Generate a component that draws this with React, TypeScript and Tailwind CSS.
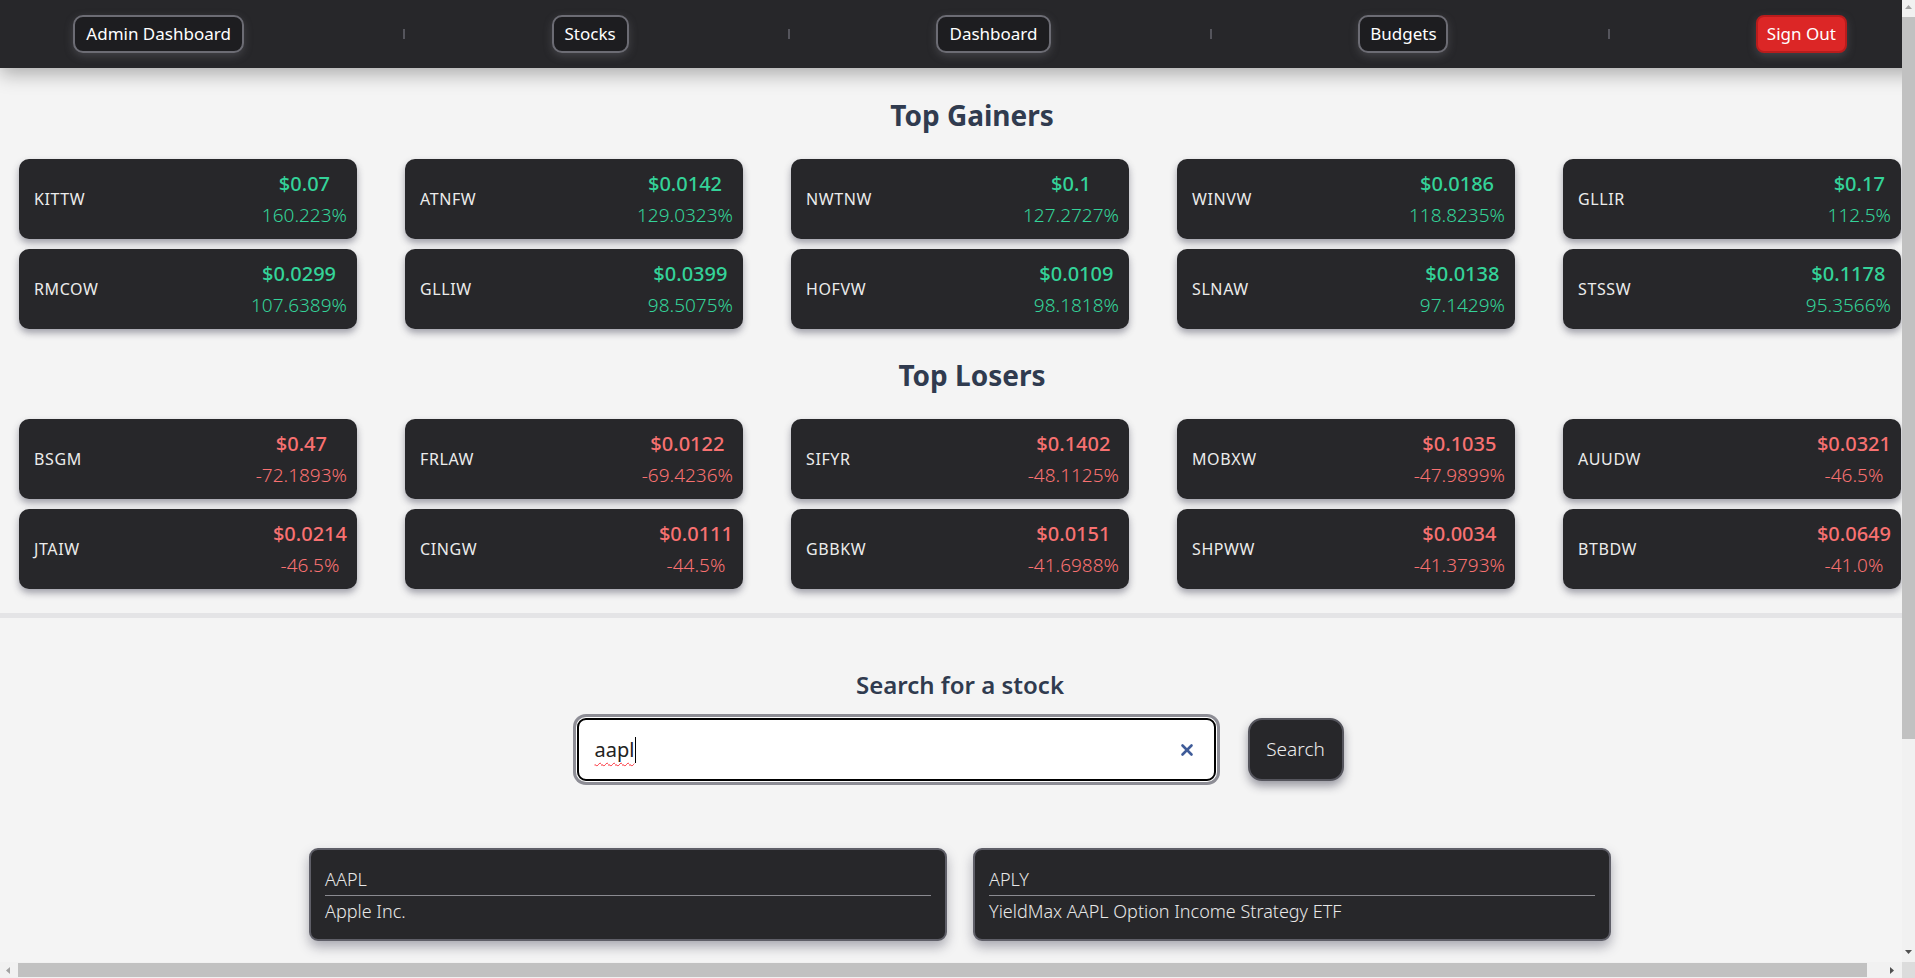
import { X } from "lucide-react";

type Quote = { ticker: string; price: string; change: string };

const gainers: Quote[] = [
  { ticker: "KITTW", price: "$0.07", change: "160.223%" },
  { ticker: "ATNFW", price: "$0.0142", change: "129.0323%" },
  { ticker: "NWTNW", price: "$0.1", change: "127.2727%" },
  { ticker: "WINVW", price: "$0.0186", change: "118.8235%" },
  { ticker: "GLLIR", price: "$0.17", change: "112.5%" },
  { ticker: "RMCOW", price: "$0.0299", change: "107.6389%" },
  { ticker: "GLLIW", price: "$0.0399", change: "98.5075%" },
  { ticker: "HOFVW", price: "$0.0109", change: "98.1818%" },
  { ticker: "SLNAW", price: "$0.0138", change: "97.1429%" },
  { ticker: "STSSW", price: "$0.1178", change: "95.3566%" },
];

const losers: Quote[] = [
  { ticker: "BSGM", price: "$0.47", change: "-72.1893%" },
  { ticker: "FRLAW", price: "$0.0122", change: "-69.4236%" },
  { ticker: "SIFYR", price: "$0.1402", change: "-48.1125%" },
  { ticker: "MOBXW", price: "$0.1035", change: "-47.9899%" },
  { ticker: "AUUDW", price: "$0.0321", change: "-46.5%" },
  { ticker: "JTAIW", price: "$0.0214", change: "-46.5%" },
  { ticker: "CINGW", price: "$0.0111", change: "-44.5%" },
  { ticker: "GBBKW", price: "$0.0151", change: "-41.6988%" },
  { ticker: "SHPWW", price: "$0.0034", change: "-41.3793%" },
  { ticker: "BTBDW", price: "$0.0649", change: "-41.0%" },
];

const results = [
  { symbol: "AAPL", name: "Apple Inc." },
  { symbol: "APLY", name: "YieldMax AAPL Option Income Strategy ETF" },
];

const navLinks = [
  { label: "Admin Dashboard", w: "w-[171px]" },
  { label: "Stocks", w: "w-[77px]" },
  { label: "Dashboard", w: "w-[115px]" },
  { label: "Budgets", w: "w-[90px]" },
];

function Divider() {
  return (
    <span className="flex w-[15px] justify-end">
      <span className="h-[10px] w-[2px] bg-[#55555c]" />
    </span>
  );
}

function NavBar() {
  return (
    <nav className="relative z-10 flex h-[68px] items-center justify-around bg-[#27272a] shadow-[0_6px_18px_rgba(0,0,0,0.3)]">
      {navLinks.map((l) => (
        <div key={l.label} className="contents">
          <button
            className={`${l.w} h-[38px] rounded-[10px] border-2 border-[#6c6c74] bg-[#1d1d20] text-[17px] text-white shadow-[0_3px_8px_rgba(120,120,130,0.35)]`}
          >
            {l.label}
          </button>
          <Divider />
        </div>
      ))}
      <button className="h-[38px] w-[91px] rounded-[8px] border-2 border-[#b91c1c] bg-[#dc2626] text-[17px] text-white shadow-[0_3px_8px_rgba(120,120,130,0.35)]">
        Sign Out
      </button>
    </nav>
  );
}

function QuoteCard({ q, up }: { q: Quote; up: boolean }) {
  return (
    <div className="flex h-[80px] items-center justify-between rounded-[10px] bg-[#27272a] pl-[15px] pr-[10px] shadow-[0_4px_7px_rgba(60,60,80,0.45)]">
      <span className="text-[16px] tracking-[0.6px] text-[#ececec]">{q.ticker}</span>
      <div className={`text-center ${up ? "text-[#34d399]" : "text-[#f87171]"}`}>
        <div className="text-[20px] font-medium leading-7">{q.price}</div>
        <div className="mt-[3px] text-[19px] font-light leading-7">{q.change}</div>
      </div>
    </div>
  );
}

function Board({ title, items, up, top }: { title: string; items: Quote[]; up: boolean; top: string }) {
  return (
    <section>
      <h2 className={`${top} mb-[26px] pl-6 text-center text-[28px] font-bold leading-9 text-[#303b4f]`}>{title}</h2>
      <div className="mx-auto grid w-[1882px] grid-cols-5 gap-x-12 gap-y-[10px]">
        {items.map((q) => (
          <QuoteCard key={q.ticker} q={q} up={up} />
        ))}
      </div>
    </section>
  );
}

function Scrollbars() {
  return (
    <>
      <div className="fixed right-0 top-0 z-20 flex h-[962px] w-[13px] flex-col items-center bg-[#f1f1f1]">
        <svg width="7" height="4" viewBox="0 0 7 4" className="mt-[5px]">
          <polygon points="3.5,0 7,4 0,4" fill="#a3a3a3" />
        </svg>
        <div className="mt-[8px] h-[722px] w-full bg-[#c1c1c1]" />
        <svg width="7" height="4" viewBox="0 0 7 4" className="mt-auto mb-[8px]">
          <polygon points="0,0 7,0 3.5,4" fill="#505050" />
        </svg>
      </div>
      <div className="fixed bottom-0 left-0 z-20 flex h-[16px] w-[1902px] items-center bg-[#f1f1f1]">
        <svg width="4" height="7" viewBox="0 0 4 7" className="ml-[6px]">
          <polygon points="4,0 4,7 0,3.5" fill="#a3a3a3" />
        </svg>
        <div className="ml-[8px] h-[14px] w-[1849px] bg-[#c1c1c1]" />
        <svg width="4" height="7" viewBox="0 0 4 7" className="ml-auto mr-[8px]">
          <polygon points="0,0 4,3.5 0,7" fill="#505050" />
        </svg>
      </div>
      <div className="fixed bottom-0 right-0 z-20 h-[16px] w-[13px] bg-[#dcdcdc]" />
    </>
  );
}

export default function App() {
  return (
    <div
      className="h-screen overflow-scroll bg-[#f4f4f4]"
      style={{ fontFamily: '"Noto Sans", "Open Sans", sans-serif' }}
    >
      <div className="w-[1920px] pb-[298px]">
        <NavBar />
        <Board title="Top Gainers" items={gainers} up top="mt-[29px]" />
        <Board title="Top Losers" items={losers} up={false} top="mt-[28px]" />

        <section className="mt-[24px] border-t-[5px] border-[#e4e4e6]">
          <h3 className="mt-[51px] text-center text-[24px] font-semibold leading-8 text-[#303b4f]">Search for a stock</h3>
          <div className="mt-[17px] flex items-center justify-center gap-8">
            <div className="flex h-[63px] w-[639px] items-center rounded-[9px] border-2 border-black bg-white pl-[16px] pr-[18px] ring-[3px] ring-[#8d8d95] ring-offset-1 ring-offset-white">
              <span className="text-[20px] text-[#222] underline decoration-red-500 decoration-wavy decoration-1 underline-offset-[5px]">
                aapl
              </span>
              <span className="ml-px h-[26px] w-px bg-black" />
              <X className="ml-auto text-[#3f5c99]" size={18} strokeWidth={3.5} />
            </div>
            <button className="h-[63px] w-[96px] rounded-[14px] border-2 border-[#55555d] bg-[#27272a] text-[19px] font-light text-[#ececec] shadow-[0_5px_10px_rgba(40,40,60,0.45)]">
              Search
            </button>
          </div>

          <div className="mt-[67px] flex justify-center gap-[26px]">
            {results.map((r) => (
              <div
                key={r.symbol}
                className="h-[93px] w-[638px] rounded-[9px] border-2 border-[#5f5f68] bg-[#27272a] px-[14px] pt-[17px] text-[18px] font-light text-[#e8e8e8] shadow-[0_6px_12px_rgba(60,60,80,0.4)]"
              >
                <div className="leading-6">{r.symbol}</div>
                <div className="mt-[4px] h-px bg-[#8a8a90]" />
                <div className="mt-[3px] leading-6">{r.name}</div>
              </div>
            ))}
          </div>
        </section>
      </div>
      <Scrollbars />
    </div>
  );
}
